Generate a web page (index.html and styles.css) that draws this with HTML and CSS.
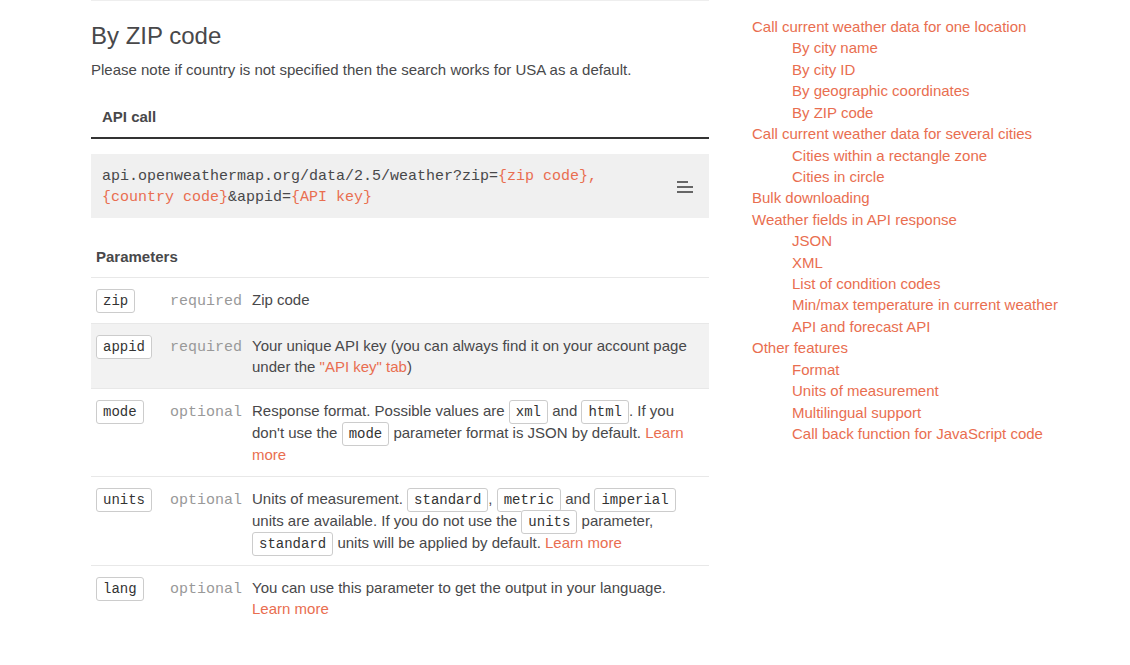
FILE: index.html
```html
<!DOCTYPE html>
<html lang="en">
<head>
<meta charset="utf-8">
<title>By ZIP code</title>
<link rel="stylesheet" href="styles.css">
</head>
<body>
<div class="page">
  <main class="content">
    <h2 class="title">By ZIP code</h2>
    <p class="note">Please note if country is not specified then the search works for USA as a default.</p>

    <div class="call-head">API call</div>
    <div class="code">
      <div class="code-text">api.openweathermap.org/data/2.5/weather?zip=<span class="hl">{zip code},</span> <span class="hl">{country code}</span>&amp;appid=<span class="hl">{API key}</span></div>
      <svg class="menu-icon" width="16" height="12" viewBox="0 0 16 12" aria-hidden="true">
        <rect x="0" y="0" width="11" height="2" fill="#666"/>
        <rect x="0" y="5" width="16" height="2" fill="#666"/>
        <rect x="0" y="10" width="16" height="2" fill="#666"/>
      </svg>
    </div>

    <table class="params">
      <thead>
        <tr><th colspan="3">Parameters</th></tr>
      </thead>
      <tbody>
        <tr>
          <td class="c-name"><code class="badge">zip</code></td>
          <td class="c-req">required</td>
          <td class="c-desc">Zip code</td>
        </tr>
        <tr class="shaded">
          <td class="c-name"><code class="badge">appid</code></td>
          <td class="c-req">required</td>
          <td class="c-desc">Your unique API key (you can always find it on your account page under the <a href="#">"API key" tab</a>)</td>
        </tr>
        <tr>
          <td class="c-name"><code class="badge">mode</code></td>
          <td class="c-req">optional</td>
          <td class="c-desc">Response format. Possible values are <code class="badge">xml</code> and <code class="badge">html</code>. If you don't use the <code class="badge">mode</code> parameter format is JSON by default. <a href="#">Learn more</a></td>
        </tr>
        <tr>
          <td class="c-name"><code class="badge">units</code></td>
          <td class="c-req">optional</td>
          <td class="c-desc">Units of measurement. <code class="badge">standard</code>, <code class="badge">metric</code> and <code class="badge">imperial</code> units are available. If you do not use the <code class="badge">units</code> parameter, <code class="badge">standard</code> units will be applied by default. <a href="#">Learn more</a></td>
        </tr>
        <tr>
          <td class="c-name"><code class="badge">lang</code></td>
          <td class="c-req">optional</td>
          <td class="c-desc">You can use this parameter to get the output in your language. <a href="#">Learn more</a></td>
        </tr>
      </tbody>
    </table>
  </main>

  <nav class="sidebar">
    <ul class="toc">
      <li><a href="#">Call current weather data for one location</a>
        <ul>
          <li><a href="#">By city name</a></li>
          <li><a href="#">By city ID</a></li>
          <li><a href="#">By geographic coordinates</a></li>
          <li><a href="#">By ZIP code</a></li>
        </ul>
      </li>
      <li><a href="#">Call current weather data for several cities</a>
        <ul>
          <li><a href="#">Cities within a rectangle zone</a></li>
          <li><a href="#">Cities in circle</a></li>
        </ul>
      </li>
      <li><a href="#">Bulk downloading</a></li>
      <li><a href="#">Weather fields in API response</a>
        <ul>
          <li><a href="#">JSON</a></li>
          <li><a href="#">XML</a></li>
          <li><a href="#">List of condition codes</a></li>
          <li><a href="#">Min/max temperature in current weather</a></li>
          <li><a href="#">API and forecast API</a></li>
        </ul>
      </li>
      <li><a href="#">Other features</a>
        <ul>
          <li><a href="#">Format</a></li>
          <li><a href="#">Units of measurement</a></li>
          <li><a href="#">Multilingual support</a></li>
          <li><a href="#">Call back function for JavaScript code</a></li>
        </ul>
      </li>
    </ul>
  </nav>
</div>
</body>
</html>
```
FILE: styles.css
```css
html, body {
  margin: 0;
  padding: 0;
  background: #fff;
}

body {
  font-family: "Liberation Sans", Arial, sans-serif;
  font-size: 15px;
  line-height: 1.42857;
  color: #48484a;
}

a {
  color: #e96e50;
  text-decoration: none;
}

.page {
  display: flex;
  align-items: flex-start;
  padding-left: 91px;
}

.content {
  width: 618px;
  flex: none;
  border-top: 1px solid #eeeeee;
}

.title {
  margin: 22px 0 0;
  font-size: 24px;
  font-weight: 400;
  line-height: 1.1;
  color: #48484a;
}

.note {
  margin: 10px 0 0;
}

.call-head {
  margin-top: 17px;
  padding: 8px 11px 10px;
  font-weight: bold;
  border-bottom: 2px solid #333;
}

.code {
  margin-top: 15px;
  background: #f0f0f0;
  padding: 11.5px 16px 9.5px 11px;
  display: flex;
  align-items: center;
  gap: 24px;
}

.code-text {
  flex: 1;
  font-family: "Liberation Mono", "Courier New", monospace;
  font-size: 15px;
  line-height: 21.4px;
}

.hl {
  color: #e96e50;
}

.menu-icon {
  flex: none;
  display: block;
  margin-top: 0;
}

.params {
  width: 100%;
  margin-top: 20px;
  border-collapse: collapse;
}

.params th {
  text-align: left;
  font-weight: bold;
  padding: 8px 5px 9.6px;
}

.params td {
  border-top: 1px solid #e8e8e8;
  padding: 11px 5px 10.5px;
  vertical-align: baseline;
}

.params tr.shaded td {
  background: #f2f2f2;
}

.c-name {
  width: 64px;
}

.c-req {
  width: 1%;
  white-space: nowrap;
  font-family: "Liberation Mono", "Courier New", monospace;
  font-size: 15px;
  color: #999;
}

.c-desc .badge {
  line-height: 19px;
}

.badge {
  font-family: "Liberation Mono", "Courier New", monospace;
  font-size: 14px;
  line-height: 1;
  color: #333;
  background: #fff;
  border: 1px solid #ccc;
  border-radius: 3px;
  padding: 3px 6px;
}

.sidebar {
  margin-left: 43px;
  padding-top: 16px;
}

.toc, .toc ul {
  list-style: none;
  margin: 0;
  padding: 0;
}

.toc ul {
  padding-left: 40px;
}
```
